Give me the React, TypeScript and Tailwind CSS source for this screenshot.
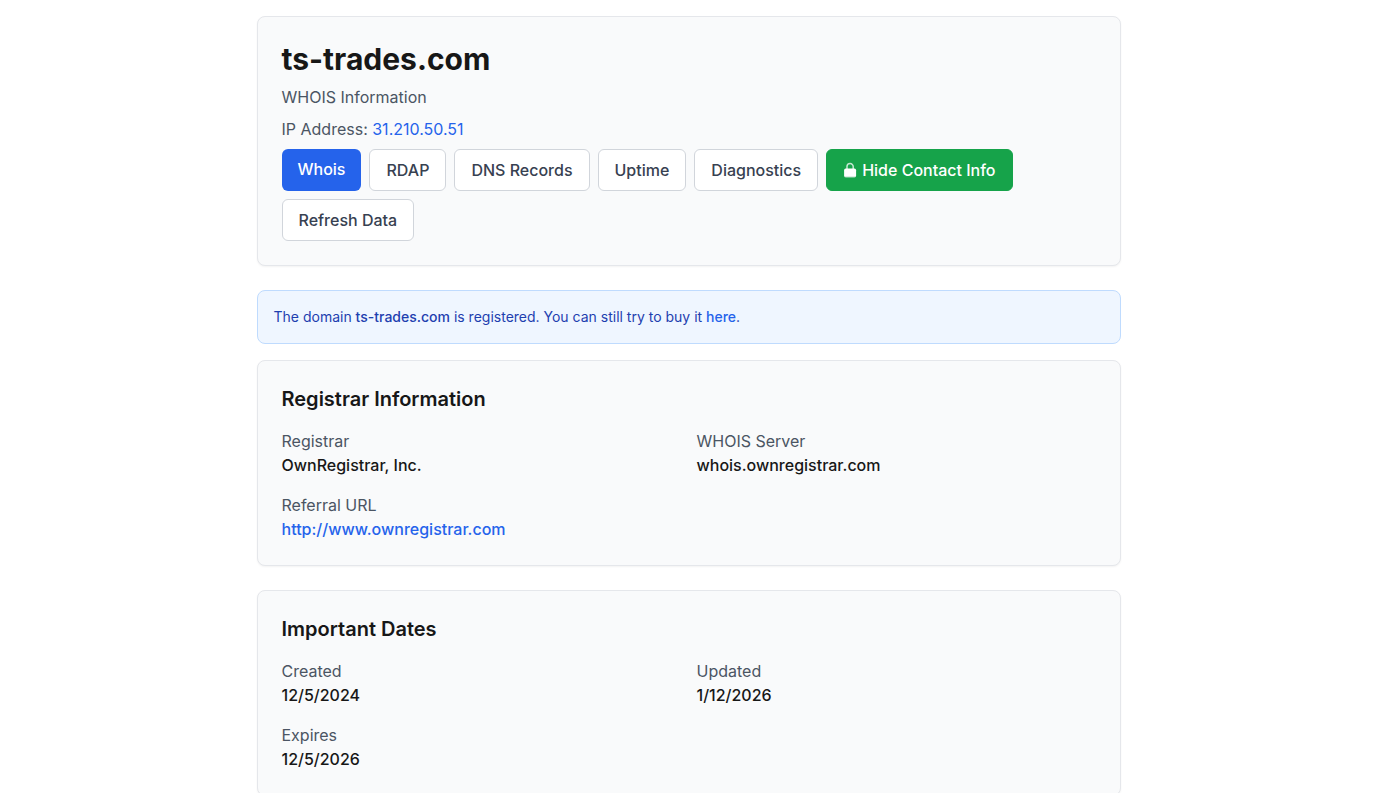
import React from "react";

const DOMAIN = "ts-trades.com";

const outlineButton =
  "px-4 py-2 rounded-md border border-[#d1d5db] bg-white text-[#374151] font-medium hover:bg-gray-50";

type Field = { label: string; value: string; href?: string };

const registrar: Field[] = [
  { label: "Registrar", value: "OwnRegistrar, Inc." },
  { label: "WHOIS Server", value: "whois.ownregistrar.com" },
  { label: "Referral URL", value: "http://www.ownregistrar.com", href: "http://www.ownregistrar.com" },
];

const dates: Field[] = [
  { label: "Created", value: "12/5/2024" },
  { label: "Updated", value: "1/12/2026" },
  { label: "Expires", value: "12/5/2026" },
];

const LockIcon: React.FC = () => (
  <svg width="15" height="16" viewBox="0 0 15 16" fill="none" aria-hidden="true">
    <path d="M4 8V4.6a3.1 3.1 0 0 1 6.2 0V8" stroke="white" strokeOpacity="0.75" strokeWidth="1.5" />
    <rect x="1.1" y="6.6" width="12" height="8.6" rx="1.6" fill="white" />
    <path d="M2 14.7h10.2" stroke="#d1e9d9" strokeWidth="0.9" strokeLinecap="round" />
  </svg>
);

const InfoCard: React.FC<{ title: string; fields: Field[] }> = ({ title, fields }) => (
  <section className="mb-6 rounded-lg border border-[#e5e7eb] bg-[#f9fafb] p-6 shadow-xs">
    <h2 className="mb-4 text-xl font-semibold">{title}</h2>
    <dl className="grid grid-cols-1 gap-4 md:grid-cols-2">
      {fields.map((f) => (
        <div key={f.label}>
          <dt className="text-[#4b5563]">{f.label}</dt>
          <dd className="font-medium">
            {f.href ? (
              <a href={f.href} className="text-[#2563eb] hover:underline">{f.value}</a>
            ) : (
              f.value
            )}
          </dd>
        </div>
      ))}
    </dl>
  </section>
);

export default function App() {
  return (
    <div className="min-h-screen bg-white pr-[13px] font-['Inter',sans-serif] text-[#171717]">
      <main className="mx-auto max-w-4xl px-4 pt-4">
        <header className="mb-6 rounded-lg border border-[#e5e7eb] bg-[#f9fafb] p-6 shadow-xs">
          <h1 className="text-3xl font-bold">{DOMAIN}</h1>
          <p className="mt-2 text-[#4b5563]">WHOIS Information</p>
          <p className="mt-2 text-[#4b5563]">
            IP Address: <a href="#ip" className="text-[#2563eb] hover:underline">31.210.50.51</a>
          </p>
          <div className="mt-2 flex flex-wrap gap-2">
            <a href="#whois" className="rounded-md bg-[#2563eb] px-4 py-2 font-medium text-white">Whois</a>
            <a href="#rdap" className={outlineButton}>RDAP</a>
            <a href="#dns" className={outlineButton}>DNS Records</a>
            <a href="#uptime" className={outlineButton}>Uptime</a>
            <a href="#diagnostics" className={outlineButton}>Diagnostics</a>
            <button
              type="button"
              className="flex items-center gap-1 rounded-md border border-[#16a34a] bg-[#16a34a] px-4 py-2 font-medium text-white"
            >
              <LockIcon />
              Hide Contact Info
            </button>
            <button type="button" className={outlineButton}>Refresh Data</button>
          </div>
        </header>

        <div className="mb-4 rounded-lg border border-[#bfdbfe] bg-[#eff6ff] p-4">
          <p className="text-sm text-[#1e40af]">
            The domain <strong className="font-medium">{DOMAIN}</strong> is registered. You can still try to buy it{" "}
            <a href="#buy" className="font-medium text-[#2563eb] hover:underline">here</a>.
          </p>
        </div>

        <InfoCard title="Registrar Information" fields={registrar} />
        <InfoCard title="Important Dates" fields={dates} />
      </main>
    </div>
  );
}
